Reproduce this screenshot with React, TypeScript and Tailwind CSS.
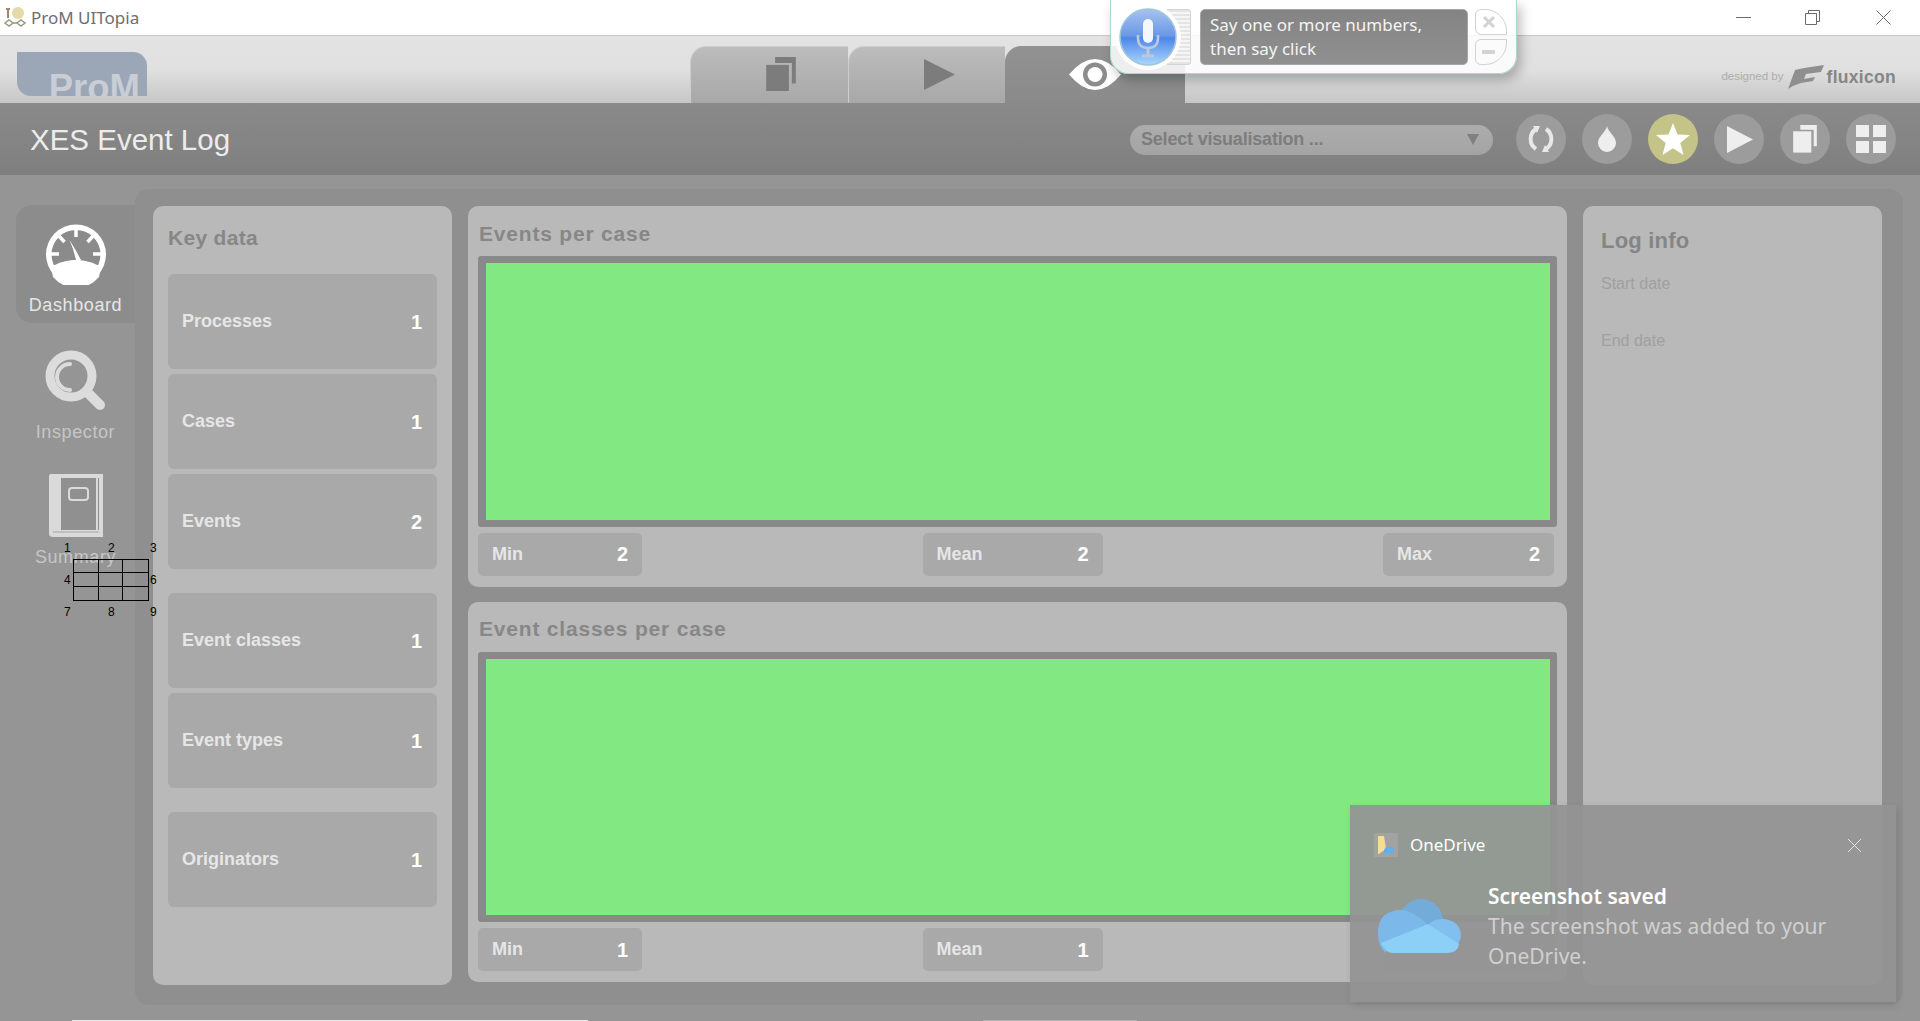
import React from 'react';

const ARIAL = "font-['Liberation_Sans',Arial,sans-serif]";

const keyDataGroups = [
  [
    { label: 'Processes', value: '1' },
    { label: 'Cases', value: '1' },
    { label: 'Events', value: '2' },
  ],
  [
    { label: 'Event classes', value: '1' },
    { label: 'Event types', value: '1' },
  ],
  [{ label: 'Originators', value: '1' }],
];

const GaugeIcon = () => (
  <svg width="60" height="61" viewBox="0 0 60 61">
    <circle cx="30" cy="30.5" r="30" fill="#ffffff" />
    <circle cx="30" cy="30.5" r="24.5" fill="#8b8b8b" />
    <path d="M7 53 A30 30 0 0 0 53 53 L55 43 C46 38 39 36 30 36 C21 36 14 38 5 43 Z" fill="#ffffff" />
    <g stroke="#ffffff" strokeWidth="3.5">
      <path d="M30 5 V13" />
      <path d="M13 12 L18.500 18" />
      <path d="M47 12 L41.500 18" />
      <path d="M5 30 H13" />
      <path d="M55 30 H47" />
    </g>
    <path d="M23.500 16 L27 25 L30 36 L35 36 L29 25 Z" fill="#ffffff" />
  </svg>
);

const InspectorIcon = () => (
  <svg width="62" height="62" viewBox="0 0 62 62">
    <circle cx="26" cy="26" r="21" fill="none" stroke="#dcdcdc" strokeWidth="9" />
    <path d="M25 14 A13 13 0 0 0 25 40" fill="none" stroke="#dcdcdc" strokeWidth="4" strokeLinecap="round" />
    <path d="M42 42 L55 55" stroke="#dcdcdc" strokeWidth="10" strokeLinecap="round" />
  </svg>
);

const SummaryIcon = () => (
  <svg width="54" height="63" viewBox="0 0 54 63">
    <path d="M2 0 H54 V63 H4 Q0 63 0 60 V2 Q0 0 2 0 Z" fill="#dadada" />
    <rect x="12" y="4" width="38" height="52" fill="#909090" />
    <rect x="47" y="4" width="2" height="52" fill="#dadada" />
    <path d="M4 58 H50" stroke="#a5a5a5" strokeWidth="1" />
    <rect x="20" y="14" width="19" height="12" rx="3" fill="none" stroke="#dadada" strokeWidth="2" />
  </svg>
);

const CopyIcon = ({ size, color }: { size: number; color: string }) => (
  <svg width={size} height={size * 1.15} viewBox="0 0 30 35">
    <path d="M9 0 H30 V27 H26 V6 H9 Z" fill={color} />
    <rect x="0" y="8" width="23" height="27" fill={color} />
  </svg>
);

const RoundButton = ({ active, children }: { active?: boolean; children: React.ReactNode }) => (
  <div
    className={`flex h-[50px] w-[50px] items-center justify-center rounded-full ${
      active ? 'bg-[#c4c488]' : 'bg-[#9c9c9c]'
    }`}
  >
    {children}
  </div>
);

const StatPill = ({ label, value, width }: { label?: string; value?: string; width: string }) => (
  <div className={`flex h-[43px] items-center justify-between rounded-[5px] bg-[#a9a9a9] px-[14px] ${width}`}>
    <span className="text-[18px] font-bold text-[#e6e6e6]">{label}</span>
    <span className="text-[20px] font-bold text-white">{value}</span>
  </div>
);

const ChartPanel = ({ title, min, mean, max }: { title: string; min: string; mean: string; max?: string }) => (
  <div className="flex flex-1 flex-col rounded-[10px] bg-[#b9b9b9] pb-[11px] pl-[10px] pr-[13px]">
    <div className="flex h-[50px] items-center pl-px pt-[5px] text-[21px] font-bold tracking-[0.8px] text-[#878787]">{title}</div>
    <div className="-mr-[3px] min-h-0 flex-1 rounded-[3px] bg-[#898989] pb-[7px] pl-[8px] pr-[7px] pt-[7px]">
      <div className="h-full w-full bg-[#82e882]" />
    </div>
    <div className="mt-[6px] flex justify-between">
      <StatPill label="Min" value={min} width="w-[164px]" />
      <StatPill label="Mean" value={mean} width="w-[180px]" />
      {/* hidden behind the toast in the second panel */}
      <StatPill label={max ? 'Max' : undefined} value={max} width="w-[171px]" />
    </div>
  </div>
);

const SideItem = ({
  label,
  active,
  top,
  children,
}: {
  label: string;
  active?: boolean;
  top: string;
  children: React.ReactNode;
}) => (
  <div className={`flex w-[119px] flex-col items-center rounded-l-[16px] ${top} ${active ? 'h-[118px] bg-[#8c8c8c]' : ''}`}>
    {children}
    <span className={`mt-[9px] text-[18px] leading-[22px] tracking-[0.6px] ${active ? 'text-[#e6e6e6]' : 'text-[#c6c6c6]'}`}>
      {label}
    </span>
  </div>
);

const MouseGrid = () => (
  <div className="absolute left-[59px] top-[540px] h-[82px] w-[102px] text-[12px] leading-[16px] text-black">
    <div className="absolute left-[14px] top-[19px] grid h-[42px] w-[76px] grid-cols-3 grid-rows-3 border border-black">
      {[0, 1, 2, 3, 4, 5, 6, 7, 8].map((cell) => (
        <div
          key={cell}
          className={`border-black ${cell % 3 !== 2 ? 'border-r' : ''} ${cell < 6 ? 'border-b' : ''}`}
        />
      ))}
    </div>
    <span className="absolute left-[5px] top-0">1</span>
    <span className="absolute left-[49px] top-0">2</span>
    <span className="absolute left-[91px] top-0">3</span>
    <span className="absolute left-[5px] top-[32px]">4</span>
    <span className="absolute left-[91px] top-[32px]">6</span>
    <span className="absolute left-[5px] top-[64px]">7</span>
    <span className="absolute left-[49px] top-[64px]">8</span>
    <span className="absolute left-[91px] top-[64px]">9</span>
  </div>
);

const SpeechBar = () => (
  <div className="absolute left-[1110px] top-0 flex h-[74px] w-[407px] items-start rounded-b-[18px] border border-t-0 border-[#a9d6d6] bg-white/85 font-['Noto_Sans',sans-serif] shadow-[4px_6px_12px_rgba(0,0,0,0.25)]">
    <div className="relative z-10 ml-[8px] mt-[8px] h-[58px] w-[58px] shrink-0 rounded-full ring-[4px] ring-white/90">
      <svg width="58" height="58" viewBox="0 0 58 58">
        <defs>
          <linearGradient id="orb" x1="0" y1="0" x2="0" y2="1">
            <stop offset="0" stopColor="#a6c2f0" />
            <stop offset="0.48" stopColor="#6a98e6" />
            <stop offset="0.52" stopColor="#4f86ea" />
            <stop offset="1" stopColor="#a9d8fc" />
          </linearGradient>
        </defs>
        <circle cx="29" cy="29" r="28" fill="url(#orb)" stroke="#9fc6d8" strokeWidth="1.500" />
        <rect x="24" y="11" width="10" height="24" rx="5" fill="#f4f7fc" />
        <path d="M19 27 V30 Q19 40 29 40 Q39 40 39 30 V27" fill="none" stroke="#bcc9da" strokeWidth="2.500" />
        <path d="M29 40 V47 M23 48 H35" stroke="#bcc9da" strokeWidth="3" />
      </svg>
    </div>
    <div className="ml-[-10px] mt-[9px] h-[56px] w-[24px] shrink-0 rounded-r-[3px] border border-[#d4d4d4] bg-[repeating-linear-gradient(0deg,#e4e4e4_0px,#e4e4e4_2px,#f6f6f6_2px,#f6f6f6_4px)]" />
    <div className="ml-[9px] mt-[9px] h-[56px] w-[268px] shrink-0 rounded-[5px] border border-[#a5a5a5] bg-gradient-to-b from-[#848484] to-[#909090] pl-[9px] pt-[3px] text-[17px] leading-[24px] text-[#f4f4f4]">
      <div>Say one or more numbers,</div>
      <div>then say click</div>
    </div>
    <div className="ml-[7px] mt-[9px] flex flex-col gap-[4px]">
      <div className="flex h-[26px] w-[32px] items-center rounded-l-[6px] rounded-tr-[22px] border border-[#d2d2d2] pl-[6px]">
        <svg width="14" height="12" viewBox="0 0 14 12">
          <path d="M2 1 L12 11 M12 1 L2 11" stroke="#d2d2d2" strokeWidth="3" />
        </svg>
      </div>
      <div className="flex h-[26px] w-[32px] items-center rounded-l-[6px] rounded-br-[22px] border border-[#d2d2d2] pl-[6px]">
        <div className="h-[4px] w-[13px] rounded-[1px] bg-[#d2d2d2]" />
      </div>
    </div>
  </div>
);

const Toast = () => (
  <div className="absolute left-[1350px] top-[805px] h-[197px] w-[546px] bg-[#949494]/[0.94] font-['Noto_Sans',sans-serif] shadow-[2px_3px_8px_rgba(0,0,0,0.1)]">
    <div className="flex items-center pl-[24px] pr-[34px] pt-[28px]">
      <div className="flex h-[24px] w-[24px] items-center justify-center bg-[#a2a2a2]">
        <svg width="18" height="20" viewBox="0 0 18 20">
          <path d="M1 1 H7 L9 14 L2 19 L1 19 Z" fill="#f7dc98" />
          <path d="M7 16 Q8 11 12 12 Q17 11 17 16 Q17 18 15 18 H8 Q7 18 7 16 Z" fill="#5fb1ec" />
        </svg>
      </div>
      <span className="ml-[12px] text-[17px] leading-[24px] text-white">OneDrive</span>
      <svg width="15" height="15" viewBox="0 0 15 15" className="ml-auto">
        <path d="M1 1 L14 14 M14 1 L1 14" stroke="#e2e2e2" strokeWidth="1" />
      </svg>
    </div>
    <div className="flex pl-[28px] pt-[25px]">
      <svg width="83" height="54" viewBox="0 0 83 54" className="mt-[17px] shrink-0">
        <circle cx="43" cy="22" r="22" fill="#74acd9" />
        <path d="M8 54 Q0 48 0 34 Q0 11 24 11 Q36 12 50 26 L8 46 Z" fill="#7cb8e9" />
        <path d="M50 26 Q56 19 66 20 Q83 22 83 38 L80 46 Z" fill="#80bfee" />
        <path d="M3 44 L50 25 L81 45 Q80 54 68 54 H16 Q7 54 3 44 Z" fill="#8dd0f7" />
      </svg>
      <div className="ml-[27px]">
        <div className="text-[21px] font-semibold leading-[28px] text-white">Screenshot saved</div>
        <div className="mt-[1px] w-[380px] text-[21px] leading-[30px] text-[#d0d0d0]">
          The screenshot was added to your OneDrive.
        </div>
      </div>
    </div>
  </div>
);

const App: React.FC = () => {
  return (
    <div className={`relative flex h-screen w-full flex-col overflow-hidden bg-[#959595] ${ARIAL}`}>
      {/* window title bar */}
      <div className="flex h-[36px] shrink-0 items-center border-b border-[#c9c9c9] bg-white">
        <svg width="24" height="24" viewBox="0 0 24 24" className="ml-[3px]">
          <circle cx="15" cy="7" r="6" fill="#e6d9a8" />
          <path d="M3 3 H7 M5 3 V12" stroke="#a08a6a" strokeWidth="2" />
          <path d="M2 17 L6 14 L10 17 L6 20 Z M14 17 L18 14 L22 17 L18 20 Z" fill="none" stroke="#9a9a80" strokeWidth="1.500" />
          <path d="M10 17 H14" stroke="#9a9a80" strokeWidth="1.500" />
        </svg>
        <span className="ml-[4px] font-['Noto_Sans',sans-serif] text-[17px] text-[#6e6e6e]">ProM UITopia</span>
        <div className="ml-auto flex items-center">
          <div className="mr-[54px] h-px w-[15px] bg-[#6a6a6a]" />
          <svg width="15" height="15" viewBox="0 0 15 15" className="mr-[56px]">
            <path d="M3.500 3 V0.500 H14.500 V11.500 H12 M0.500 3.500 H11.500 V14.500 H0.500 Z" fill="none" stroke="#6a6a6a" />
          </svg>
          <svg width="15" height="15" viewBox="0 0 15 15" className="mr-[29px]">
            <path d="M0.500 0.500 L14.500 14.500 M14.500 0.500 L0.500 14.500" stroke="#6a6a6a" />
          </svg>
        </div>
      </div>

      {/* header with logo and perspective tabs */}
      <div className="flex h-[67px] shrink-0 items-end bg-gradient-to-b from-[#e3e3e3] via-[#e0e0e0] to-[#c6c6c6]">
        <div className="mb-[7px] ml-[17px] flex h-[44px] w-[130px] items-start justify-end overflow-hidden rounded-bl-[14px] rounded-tr-[14px] bg-[#9ba6b7] pr-[7px]">
          <span className="mt-[17px] text-[36.500px] font-bold leading-[38px] text-[#c9ced6]">ProM</span>
        </div>
        <div className="ml-[543px] flex h-[57px]">
          <div className="flex w-[158px] items-center justify-center rounded-tl-[16px] border-l border-t border-[#cdcdcd] bg-gradient-to-b from-[#bcbcbc] to-[#a8a8a8] pb-[2px] pl-[22px]">
            <CopyIcon size={30} color="#7c7c7c" />
          </div>
          <div className="flex w-[157px] items-center justify-center rounded-tl-[16px] border-l border-t border-[#cdcdcd] bg-gradient-to-b from-[#bcbcbc] to-[#a8a8a8] pb-[2px] pl-[24px]">
            <svg width="31" height="31" viewBox="0 0 31 31">
              <path d="M0 0 L31 15.500 L0 31 Z" fill="#7c7c7c" />
            </svg>
          </div>
          <div className="flex w-[180px] items-center justify-center rounded-tl-[16px] bg-gradient-to-b from-[#929292] to-[#8a8a8a] pb-[1px]">
            <svg width="52" height="31" viewBox="0 0 52 31">
              <path d="M0 15.500 Q13 0 26 0 Q39 0 52 15.500 Q39 31 26 31 Q13 31 0 15.500 Z" fill="#ffffff" />
              <circle cx="26" cy="15.500" r="12" fill="#8c8c8c" />
              <circle cx="26" cy="15.500" r="7.500" fill="#ffffff" />
            </svg>
          </div>
        </div>
        <div className="mb-[13px] ml-auto mr-[24px] flex items-center">
          <span className="text-[11.500px] text-[#adadad]">designed by</span>
          <svg width="36" height="24" viewBox="0 0 36 24" className="ml-[4px]">
            <path d="M7 5 Q14 3 36 0 L33 7 L18 9 L16 14 L27 12 L25 16 L13 18 Q6 20 0 24 Z" fill="#8f8f8f" />
          </svg>
          <span className="ml-[3px] text-[17.500px] font-bold tracking-[0.3px] text-[#868686]">fluxicon</span>
        </div>
      </div>

      {/* title bar of the current view */}
      <div className="flex h-[72px] shrink-0 items-center bg-gradient-to-b from-[#8a8a8a] to-[#7f7f7f] pl-[30px] pr-[24px]">
        <span className="mt-[2px] text-[29.500px] leading-none text-[#ececec]">XES Event Log</span>
        <div className="ml-auto mr-[23px] mt-px flex h-[30px] w-[363px] items-center justify-between rounded-full bg-gradient-to-b from-[#acacac] to-[#a4a4a4] pl-[11px] pr-[14px]">
          <span className="text-[18px] font-bold tracking-[-0.2px] text-[#7d7d7d]">Select visualisation ...</span>
          <svg width="12" height="11" viewBox="0 0 12 11">
            <path d="M0 0 H12 L6 11 Z" fill="#808080" />
          </svg>
        </div>
        <div className="flex gap-[16px]">
          <RoundButton>
            <svg width="26" height="28" viewBox="0 0 26 28">
              <path d="M8 4 A12 12 0 0 0 8 24" fill="none" stroke="#e8e8e8" strokeWidth="4" />
              <path d="M18 4 A12 12 0 0 1 18 24" fill="none" stroke="#e8e8e8" strokeWidth="4" />
              <path d="M5 1 L12 1 L9 8 Z M21 27 L14 27 L17 20 Z" fill="#e8e8e8" />
            </svg>
          </RoundButton>
          <RoundButton>
            <svg width="20" height="26" viewBox="0 0 20 26">
              <path d="M10 0 C11 6 19 10 19 17 A9 9 0 0 1 1 17 C1 10 9 6 10 0 Z" fill="#eeeeee" />
            </svg>
          </RoundButton>
          <RoundButton active>
            <svg width="34" height="32" viewBox="0 0 34 32">
              <path d="M17 0 L21.500 11.500 L34 12 L24.300 20 L27.500 32 L17 25.300 L6.500 32 L9.700 20 L0 12 L12.500 11.500 Z" fill="#ffffff" />
            </svg>
          </RoundButton>
          <RoundButton>
            <svg width="26" height="27" viewBox="0 0 26 27" className="ml-[2px]">
              <path d="M0 0 L26 13.500 L0 27 Z" fill="#eeeeee" />
            </svg>
          </RoundButton>
          <RoundButton>
            <CopyIcon size={24} color="#eeeeee" />
          </RoundButton>
          <RoundButton>
            <div className="grid grid-cols-2 gap-[4px]">
              <div className="h-[12px] w-[13px] bg-[#eeeeee]" />
              <div className="h-[12px] w-[13px] bg-[#eeeeee]" />
              <div className="h-[12px] w-[13px] bg-[#eeeeee]" />
              <div className="h-[12px] w-[13px] bg-[#eeeeee]" />
            </div>
          </RoundButton>
        </div>
      </div>

      {/* main area */}
      <div className="flex min-h-0 flex-1">
        <div className="flex w-[135px] shrink-0 flex-col items-end pt-[30px]">
          <SideItem label="Dashboard" active top="pt-[19px]">
            <GaugeIcon />
          </SideItem>
          <SideItem label="Inspector" top="pt-[27px]">
            <InspectorIcon />
          </SideItem>
          <SideItem label="Summary" top="pt-[31px]">
            <SummaryIcon />
          </SideItem>
        </div>

        <div className="mb-[15px] mr-[17px] mt-[14px] flex flex-1 gap-[16px] rounded-[14px] bg-[#8f8f8f] pb-[20px] pl-[18px] pr-[21px] pt-[17px]">
          <div className="flex w-[299px] shrink-0 flex-col rounded-[10px] bg-[#b9b9b9] px-[15px]">
            <div className="flex h-[68px] items-center pb-[5px] text-[21px] font-bold tracking-[0.3px] text-[#878787]">
              Key data
            </div>
            <div className="flex flex-col gap-[24px]">
              {keyDataGroups.map((group, groupIndex) => (
                <div key={groupIndex} className="flex flex-col gap-[5px]">
                  {group.map((row) => (
                    <div
                      key={row.label}
                      className="flex h-[95px] items-center justify-between rounded-[6px] bg-[#a9a9a9] pl-[14px] pr-[15px]"
                    >
                      <span className="text-[18px] font-bold text-[#e6e6e6]">{row.label}</span>
                      <span className="text-[20px] font-bold text-white">{row.value}</span>
                    </div>
                  ))}
                </div>
              ))}
            </div>
          </div>

          <div className="mb-[3px] flex min-w-0 flex-1 flex-col gap-[15px]">
            <ChartPanel title="Events per case" min="2" mean="2" max="2" />
            <ChartPanel title="Event classes per case" min="1" mean="1" />
          </div>

          <div className="w-[299px] shrink-0 rounded-[10px] bg-[#b9b9b9] pl-[18px] pt-[21px]">
            <div className="text-[22px] font-bold leading-[28px] tracking-[0.2px] text-[#858585]">Log info</div>
            <div className="mt-[20px] text-[16px] leading-[18px] text-[#a0a0a0]">Start date</div>
            <div className="mt-[39px] text-[16px] leading-[18px] text-[#a0a0a0]">End date</div>
          </div>
        </div>
      </div>

      {/* slivers of the window underneath */}
      <div className="flex h-px shrink-0">
        <div className="ml-[72px] w-[516px] bg-[#e8e8e8]" />
        <div className="ml-[395px] w-[154px] bg-[#b0b0b0]" />
      </div>

      <MouseGrid />
      <SpeechBar />
      <Toast />
    </div>
  );
};

export default App;
